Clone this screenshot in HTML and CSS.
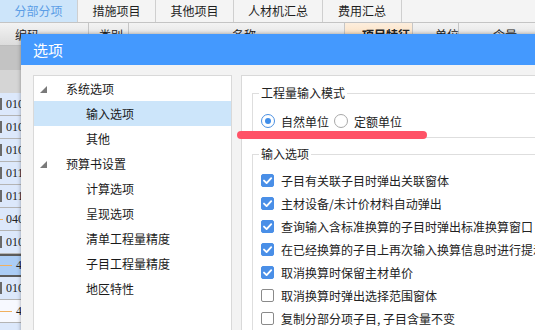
FILE: index.html
```html
<!DOCTYPE html>
<html lang="zh">
<head>
<meta charset="utf-8">
<title>选项</title>
<link rel="stylesheet" href="styles.css">
</head>
<body>
<div class="app">
  <div class="tabs">
    <div class="tab active w78">分部分项</div>
    <div class="tab w78">措施项目</div>
    <div class="tab w78">其他项目</div>
    <div class="tab w89">人材机汇总</div>
    <div class="tab w79">费用汇总</div>
  </div>
  <div class="colhead">
    <div class="hc c-code">编码</div>
    <div class="hc c-type">类别</div>
    <div class="hc c-name">名称</div>
    <div class="hc c-feat">项目特征</div>
    <div class="hc c-unit">单位</div>
    <div class="hc c-qty">含量</div>
  </div>
  <div class="sheet">
    <div class="blank dark"></div>
    <div class="blank light"></div>
    <div class="r"><span class="bar"></span><span class="num">010</span></div>
    <div class="r"><span class="bar"></span><span class="num">010</span></div>
    <div class="r"><span class="bar"></span><span class="num">010</span></div>
    <div class="r"><span class="bar"></span><span class="num">011</span></div>
    <div class="r"><span class="bar"></span><span class="num">011</span></div>
    <div class="r"><span class="dash d3"></span><span class="num">040</span></div>
    <div class="r"><span class="bar"></span><span class="num">010</span></div>
    <div class="r hi"><span class="dash d12"></span><span class="num q">4</span></div>
    <div class="r"><span class="bar"></span><span class="num">010</span></div>
    <div class="r white"><span class="dash d10"></span><span class="num q">4</span></div>
    <div class="r"></div>
  </div>

  <div class="dialog">
    <div class="dtitle">选项</div>
    <div class="dbody">
      <div class="tree">
        <div class="node l1"><span class="tri"><svg width="7" height="7" viewBox="0 0 7 7"><polygon points="7,0 7,7 0,7" fill="#7a7a7a"/></svg></span>系统选项</div>
        <div class="node l2 sel">输入选项</div>
        <div class="node l2">其他</div>
        <div class="node l1"><span class="tri"><svg width="7" height="7" viewBox="0 0 7 7"><polygon points="7,0 7,7 0,7" fill="#7a7a7a"/></svg></span>预算书设置</div>
        <div class="node l2">计算选项</div>
        <div class="node l2">呈现选项</div>
        <div class="node l2">清单工程量精度</div>
        <div class="node l2">子目工程量精度</div>
        <div class="node l2">地区特性</div>
      </div>
      <div class="panel">
        <fieldset class="grp g1">
          <legend>工程量输入模式</legend>
          <div class="radios">
            <span class="radio on"></span><span class="rlabel">自然单位</span>
            <span class="radio"></span><span class="rlabel">定额单位</span>
          </div>
        </fieldset>
        <fieldset class="grp g2">
          <legend>输入选项</legend>
          <div class="chk"><span class="box on"><svg width="13" height="13" viewBox="0 0 13 13"><path d="M3 6.6 L5.6 9.1 L10.2 4.2" fill="none" stroke="#fff" stroke-width="1.9" stroke-linecap="round" stroke-linejoin="round"/></svg></span><span class="ctext">子目有关联子目时弹出关联窗体</span></div>
          <div class="chk"><span class="box on"><svg width="13" height="13" viewBox="0 0 13 13"><path d="M3 6.6 L5.6 9.1 L10.2 4.2" fill="none" stroke="#fff" stroke-width="1.9" stroke-linecap="round" stroke-linejoin="round"/></svg></span><span class="ctext">主材设备/未计价材料自动弹出</span></div>
          <div class="chk"><span class="box on"><svg width="13" height="13" viewBox="0 0 13 13"><path d="M3 6.6 L5.6 9.1 L10.2 4.2" fill="none" stroke="#fff" stroke-width="1.9" stroke-linecap="round" stroke-linejoin="round"/></svg></span><span class="ctext">查询输入含标准换算的子目时弹出标准换算窗口</span></div>
          <div class="chk"><span class="box on"><svg width="13" height="13" viewBox="0 0 13 13"><path d="M3 6.6 L5.6 9.1 L10.2 4.2" fill="none" stroke="#fff" stroke-width="1.9" stroke-linecap="round" stroke-linejoin="round"/></svg></span><span class="ctext">在已经换算的子目上再次输入换算信息时进行提示</span></div>
          <div class="chk"><span class="box on"><svg width="13" height="13" viewBox="0 0 13 13"><path d="M3 6.6 L5.6 9.1 L10.2 4.2" fill="none" stroke="#fff" stroke-width="1.9" stroke-linecap="round" stroke-linejoin="round"/></svg></span><span class="ctext">取消换算时保留主材单价</span></div>
          <div class="chk"><span class="box"></span><span class="ctext">取消换算时弹出选择范围窗体</span></div>
          <div class="chk"><span class="box"></span><span class="ctext">复制分部分项子目, 子目含量不变</span></div>
        </fieldset>
      </div>
    </div>
  </div>
  <div class="mark"></div>
</div>
</body>
</html>
```
FILE: styles.css
```css
* { box-sizing: border-box; }
html, body { margin: 0; padding: 0; }
body {
  width: 535px;
  height: 330px;
  overflow: hidden;
  background: #fff;
  font-family: "Noto Sans CJK SC", "Noto Sans", sans-serif;
  color: #222;
}
.app { position: relative; width: 535px; height: 330px; overflow: hidden; }

/* top tabs */
.tabs {
  display: flex;
  height: 23px;
  background: #f4f4f4;
  border-bottom: 1px solid #c4c4c4;
}
.tab {
  height: 22px;
  line-height: 22px;
  font-size: 12px;
  text-align: center;
  color: #1e1e1e;
  border-right: 1px solid #cfcfcf;
}
.tab.active { background: #cde5fa; color: #5b9de6; }
.w78 { width: 78px; }
.w89 { width: 89px; }
.w79 { width: 79px; }

/* column header */
.colhead {
  display: flex;
  height: 23px;
  background: linear-gradient(#f3f3f3, #dcdcdc);
  border-bottom: 1px solid #bdbdbd;
}
.hc {
  height: 23px;
  line-height: 23px;
  font-size: 12px;
  color: #222;
  border-right: 1px solid #c6c6c6;
  white-space: nowrap;
}
.c-code { width: 89px; padding-left: 15px; }
.c-type { width: 40px; padding-left: 10px; }
.c-name { width: 216px; padding-left: 103px; }
.c-feat { width: 68px; padding-left: 17px; font-weight: bold; background: linear-gradient(#fdeedd, #f8d6ae); }
.c-unit { width: 46px; padding-left: 22px; }
.c-qty { flex: 1; padding-left: 34px; border-right: none; }

/* sheet rows behind dialog */
.sheet { display: flex; flex-direction: column; }
.blank.dark { height: 24px; background: #c3c3c3; }
.blank.light { height: 23px; background: #d5d5d5; }
.r {
  position: relative;
  display: flex;
  align-items: center;
  height: 23px;
  background: #dce8fb;
  border-bottom: 1px solid #b4b4b4;
  font-family: "Liberation Serif", serif;
  font-size: 12px;
  color: #222;
}
.r.hi { background: #abcdf6; border-top: 2px solid #5c5c5c; border-bottom: 2px solid #5c5c5c; }
.r.white { background: #f7f9ff; }
.bar { width: 2px; height: 12px; background: #6a6a6a; margin-right: 4px; }
.dash { height: 1px; background: #f0b060; margin-right: 3px; }
.d3 { width: 3px; }
.d12 { width: 12px; }
.d10 { width: 12px; }
.num.q { margin-left: 1px; }

/* dialog */
.dialog {
  position: absolute;
  left: 21px;
  top: 34px;
  width: 570px;
  height: 320px;
  background: #f3f3f3;
  box-shadow: 0 0 4px rgba(0, 0, 0, 0.35);
}
.dtitle {
  height: 31px;
  line-height: 31px;
  padding-left: 12px;
  background: #4499fe;
  color: #fff;
  font-size: 15px;
}
.dbody {
  display: flex;
  gap: 9px;
  padding: 10px 0 0 12px;
}
.tree {
  width: 199px;
  height: 280px;
  background: #fff;
  border: 1px solid #d9d9d9;
}
.node {
  display: flex;
  align-items: center;
  height: 25px;
  font-size: 12px;
  color: #1a1a1a;
  white-space: nowrap;
}
.node.l1 { padding-left: 6px; }
.node.l2 { padding-left: 52px; }
.node.sel { background: #cce5fa; }
.tri { display: flex; align-items: center; width: 26px; height: 25px; padding-top: 2px; }

.panel {
  flex: 1;
  height: 280px;
  background: #fff;
  border: 1px solid #d9d9d9;
  padding: 9px 0 0 10px;
}
.grp {
  margin: 0 0 8px 0;
  border: 1px solid #dedede;
  min-width: 0;
}
.grp legend {
  padding: 0 2px;
  margin-left: -2px;
  font-size: 12px;
  line-height: 16px;
  color: #222;
}
.g1 { padding: 12px 0 8px 8px; }
.g2 { padding: 7px 0 10px 8px; }

.radios { display: flex; align-items: center; height: 16px; font-size: 12px; white-space: nowrap; }
.radio {
  width: 14px;
  height: 14px;
  border-radius: 50%;
  border: 1px solid #a8a8a8;
  background: #fff;
  display: flex;
  align-items: center;
  justify-content: center;
}
.radio.on { border-color: #4a90e2; }
.radio.on::after {
  content: "";
  width: 6px;
  height: 6px;
  border-radius: 50%;
  background: #3f8eea;
}
.rlabel { margin-left: 6px; margin-right: 5px; color: #222; }

.chk {
  display: flex;
  align-items: center;
  height: 23px;
  font-size: 12px;
  white-space: nowrap;
}
.box {
  width: 13px;
  height: 13px;
  border-radius: 2px;
  border: 1px solid #8a8a8a;
  background: #fff;
  flex: none;
  display: flex;
}
.box.on { background: #4a8fe7; border-color: #4a8fe7; }
.box.on svg { margin: -1px; }
.ctext { margin-left: 7px; color: #222; }

/* annotation stroke */
.mark {
  position: absolute;
  left: 237px;
  top: 131px;
  width: 190px;
  height: 8px;
  border-radius: 4px;
  background: #ff5267;
}
```
